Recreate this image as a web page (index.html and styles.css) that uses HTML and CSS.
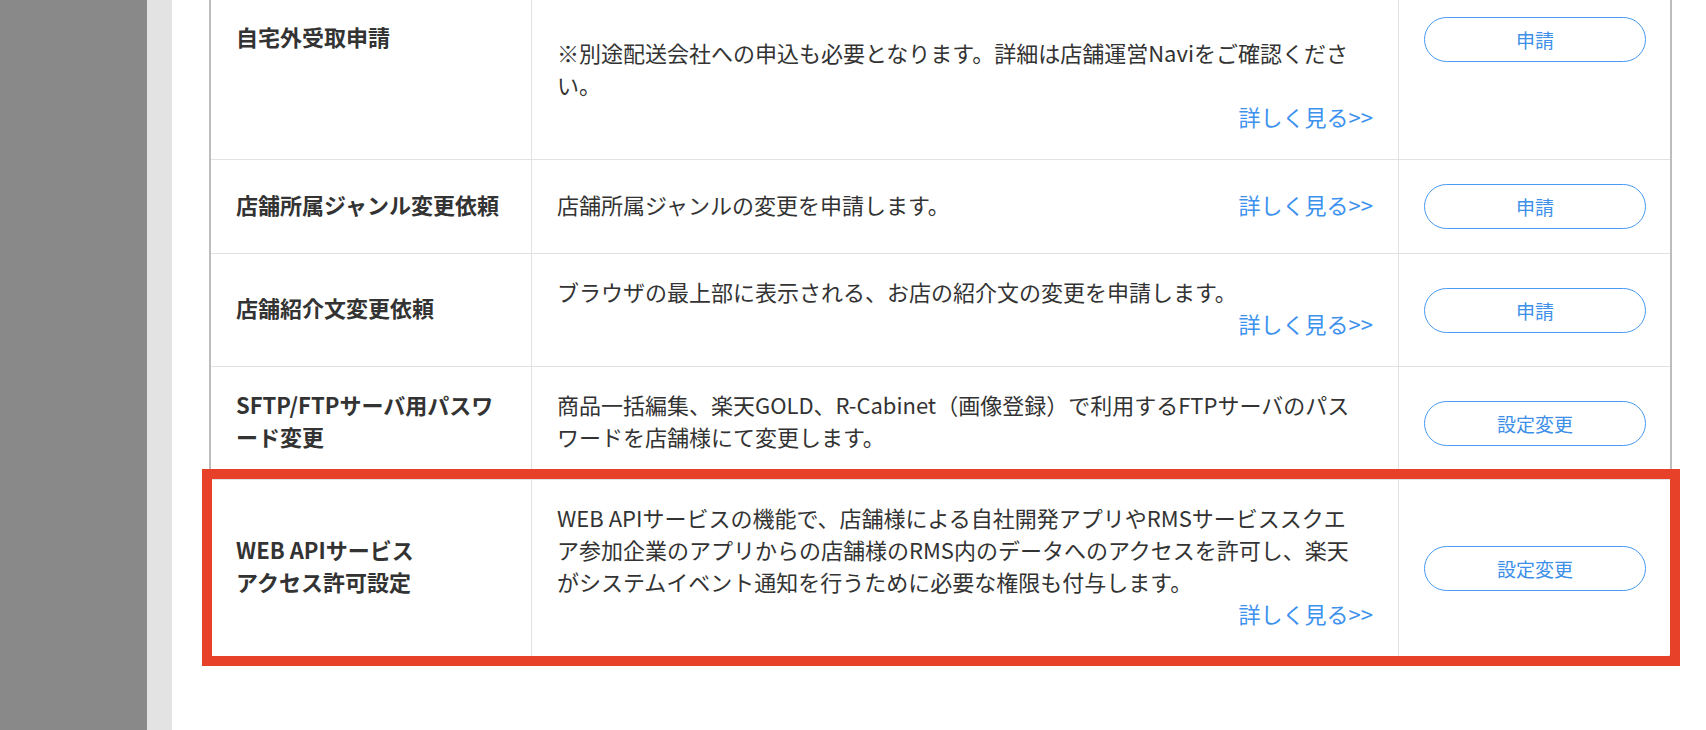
FILE: index.html
```html
<!DOCTYPE html>
<html lang="ja">

<head>
    <meta charset="UTF-8">
    <meta name="viewport" content="width=device-width, initial-scale=1.0">
    <title>店舗設定 - 申請・各種設定</title>
    <link rel="stylesheet" href="styles.css">
</head>

<body>
    <div class="layout">
        <div class="sidebar"></div>
        <div class="gutter"></div>

        <main class="main">
            <div class="table-wrap">
                <table class="settings">
                    <colgroup>
                        <col class="col-name">
                        <col class="col-desc">
                        <col class="col-action">
                    </colgroup>
                    <tr>
                        <th>自宅外受取申請</th>
                        <td class="text">
                            <div class="desc">
                                <p class="note">※別途配送会社への申込も必要となります。詳細は店舗運営Naviをご確認ください。</p>
                                <a class="more" href="#">詳しく見る&gt;&gt;</a>
                            </div>
                        </td>
                        <td class="action"><button class="btn">申請</button></td>
                    </tr>
                    <tr>
                        <th>店舗所属ジャンル変更依頼</th>
                        <td class="text">
                            <div class="desc">
                                <p>店舗所属ジャンルの変更を申請します。</p>
                                <a class="more" href="#">詳しく見る&gt;&gt;</a>
                            </div>
                        </td>
                        <td class="action"><button class="btn">申請</button></td>
                    </tr>
                    <tr>
                        <th>店舗紹介文変更依頼</th>
                        <td class="text">
                            <div class="desc">
                                <p>ブラウザの最上部に表示される、お店の紹介文の変更を申請します。</p>
                                <a class="more" href="#">詳しく見る&gt;&gt;</a>
                            </div>
                        </td>
                        <td class="action"><button class="btn">申請</button></td>
                    </tr>
                    <tr>
                        <th>SFTP/FTPサーバ用パスワード変更</th>
                        <td class="text">
                            <div class="desc">
                                <p>商品一括編集、楽天GOLD、R-Cabinet（画像登録）で利用するFTPサーバのパス<br>ワードを店舗様にて変更します。</p>
                            </div>
                        </td>
                        <td class="action"><button class="btn">設定変更</button></td>
                    </tr>
                    <tr>
                        <th>WEB APIサービス<br>アクセス許可設定</th>
                        <td class="text">
                            <div class="desc">
                                <p>WEB APIサービスの機能で、店舗様による自社開発アプリやRMSサービススクエ<br>ア参加企業のアプリからの店舗様のRMS内のデータへのアクセスを許可し、楽天<br>がシステムイベント通知を行うために必要な権限も付与します。</p>
                                <a class="more" href="#">詳しく見る&gt;&gt;</a>
                            </div>
                        </td>
                        <td class="action"><button class="btn">設定変更</button></td>
                    </tr>
                </table>

                <div class="highlight"></div>
            </div>
        </main>
    </div>
</body>

</html>
```

FILE: styles.css
```css
body {
    margin: 0;
    height: 730px;
    overflow: hidden;
    font-family: "Noto Sans CJK JP", sans-serif;
    color: #333;
    background-color: #fff;
}

.layout {
    display: flex;
    height: 730px;
}

.sidebar {
    width: 147px;
    background-color: #898989;
}

.gutter {
    width: 25px;
    background-color: #e3e3e3;
}

.main {
    flex: 1;
    padding: 0 34px 0 37px;
    background-color: #fff;
}

/* page is scrolled: the top of the table is above the fold */
.table-wrap {
    position: relative;
    margin-top: -83px;
}

.settings {
    width: 1463px;
    table-layout: fixed;
    border-collapse: separate;
    border-spacing: 0;
    border: 2px solid #bdbdbd;
    border-radius: 4px;
    font-size: 22px;
    line-height: 32px;
}

.col-name {
    width: 320px;
}

.col-desc {
    width: 867px;
}

.col-action {
    width: 272px;
}

.settings th,
.settings td {
    padding: 21px 25px 27px;
    vertical-align: middle;
    text-align: left;
    border-top: 1px solid #e2e2e2;
}

.settings td.action {
    padding: 24px 25px;
}

.settings tr:first-child th,
.settings tr:first-child td {
    border-top: none;
}

.settings td {
    border-left: 1px solid #e2e2e2;
}

.settings th {
    font-weight: bold;
    color: #333;
}

.desc {
    display: flex;
    flex-wrap: wrap;
    column-gap: 20px;
}

.desc p {
    margin: 0;
}

.desc .note {
    margin-top: 96px;
}

.more {
    margin-left: auto;
    color: #3d92ee;
    text-decoration: none;
}

.btn {
    display: block;
    width: 222px;
    height: 45px;
    padding: 0;
    border: 1px solid #4a9bf1;
    border-radius: 23px;
    background-color: #fff;
    color: #3d8fe8;
    font-family: "Noto Sans CJK JP", sans-serif;
    font-size: 19px;
    cursor: pointer;
}

.highlight {
    position: absolute;
    left: -7px;
    right: -8px;
    bottom: -8px;
    height: 177px;
    border: 10px solid #e8412a;
}
```
